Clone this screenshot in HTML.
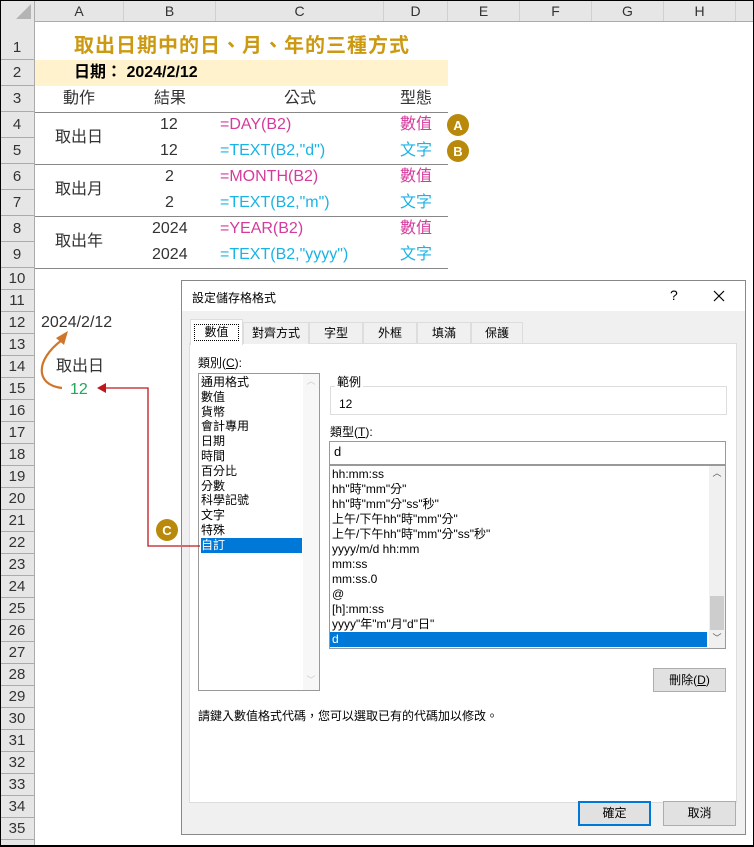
<!DOCTYPE html>
<html><head><meta charset="utf-8"><style>
*{margin:0;padding:0;box-sizing:border-box}
body{width:754px;height:847px;position:relative;background:#fff;font-family:"Liberation Sans","Noto Sans CJK TC",sans-serif;overflow:hidden}
.a{position:absolute;white-space:nowrap}
.hd{background:#e6e6e6;color:#333;font-size:14px}
.cell{font-size:16px;color:#333;height:26px;line-height:26px}
.dlg{font-size:12px;color:#000}
</style></head><body>
<div class="a" style="left:0;top:0;width:754px;height:847px;border:1px solid #000;border-bottom:2px solid #000;z-index:50;pointer-events:none"></div>
<div class="a hd" style="left:0;top:0;width:754px;height:22px;border-bottom:1px solid #ababab"></div>
<div class="a hd" style="left:0;top:0;width:35px;height:847px;border-right:1px solid #ababab"></div>
<svg class="a" style="left:0;top:0" width="35" height="22"><polygon points="31,4 31,19 16,19" fill="#b4b4b4"/></svg>
<div id="cols"></div>
<div id="rows"></div>
<script>
var c=[35,124,216,384,448,520,592,664,736,754],L="ABCDEFGH",h="";
for(var i=0;i<8;i++){h+='<div class="a hd" style="left:'+c[i]+'px;top:0;width:'+(c[i+1]-c[i])+'px;height:21px;border-right:1px solid #d0d0d0;text-align:center;line-height:22px">'+L[i]+'</div>';}
document.getElementById('cols').innerHTML=h;
var r=[22,60,86,112,138,164,190,216,242,268];for(var n=10;n<=36;n++)r.push(268+(n-9)*22);
h="";for(var n=1;n<=35;n++){var t=r[n-1],b=r[n];h+='<div class="a hd" style="left:0;top:'+t+'px;width:34px;height:'+(b-t)+'px;border-bottom:1px solid #ababab;text-align:center;line-height:'+(n==1?52:(b-t))+'px;font-size:15px">'+n+'</div>';}
document.getElementById('rows').innerHTML=h;
</script>
<div class="a" style="left:74px;top:29px;font-size:20px;font-weight:bold;color:#cc9a12;letter-spacing:1px">取出日期中的日、月、年的三種方式</div>
<div class="a" style="left:35px;top:60px;width:413px;height:26px;background:#fff2cc"></div>
<div class="a cell" style="left:74px;top:60px;color:#000;font-weight:bold">日期：&nbsp;2024/2/12</div>
<div class="a" style="left:35px;top:112px;width:413px;height:1px;background:#888"></div>
<div class="a" style="left:35px;top:164px;width:413px;height:1px;background:#888"></div>
<div class="a" style="left:35px;top:216px;width:413px;height:1px;background:#888"></div>
<div class="a" style="left:35px;top:268px;width:413px;height:1px;background:#888"></div>
<div class="a cell" style="left:63px;top:86px">動作</div>
<div class="a cell" style="left:154px;top:86px">結果</div>
<div class="a cell" style="left:284px;top:86px">公式</div>
<div class="a cell" style="left:400px;top:86px">型態</div>
<div class="a cell" style="left:55px;top:125px">取出日</div>
<div class="a cell" style="left:55px;top:177px">取出月</div>
<div class="a cell" style="left:55px;top:229px">取出年</div>
<div class="a cell" style="left:160px;top:112px">12</div>
<div class="a cell" style="left:160px;top:138px">12</div>
<div class="a cell" style="left:165px;top:164px">2</div>
<div class="a cell" style="left:165px;top:190px">2</div>
<div class="a cell" style="left:152px;top:216px">2024</div>
<div class="a cell" style="left:152px;top:242px">2024</div>
<div class="a cell" style="left:220px;top:112px;color:#d63a9c">=DAY(B2)</div>
<div class="a cell" style="left:220px;top:138px;color:#1ab3e6">=TEXT(B2,"d")</div>
<div class="a cell" style="left:220px;top:164px;color:#d63a9c">=MONTH(B2)</div>
<div class="a cell" style="left:220px;top:190px;color:#1ab3e6">=TEXT(B2,"m")</div>
<div class="a cell" style="left:220px;top:216px;color:#d63a9c">=YEAR(B2)</div>
<div class="a cell" style="left:220px;top:242px;color:#1ab3e6">=TEXT(B2,"yyyy")</div>
<div class="a cell" style="left:400px;top:112px;color:#d63a9c">數值</div>
<div class="a cell" style="left:400px;top:138px;color:#1ab3e6">文字</div>
<div class="a cell" style="left:400px;top:164px;color:#d63a9c">數值</div>
<div class="a cell" style="left:400px;top:190px;color:#1ab3e6">文字</div>
<div class="a cell" style="left:400px;top:216px;color:#d63a9c">數值</div>
<div class="a cell" style="left:400px;top:242px;color:#1ab3e6">文字</div>
<div class="a cell" style="left:41px;top:310px">2024/2/12</div>
<div class="a cell" style="left:56px;top:354px">取出日</div>
<div class="a cell" style="left:70px;top:377px;color:#1fa85a">12</div>
<svg class="a" style="left:0;top:0;z-index:5" width="754" height="847">
<circle cx="458" cy="125" r="11" fill="#b8890a"/><text x="458" y="130" text-anchor="middle" font-size="13" font-weight="bold" fill="#fff" font-family="Liberation Sans">A</text>
<circle cx="458" cy="151" r="11" fill="#b8890a"/><text x="458" y="156" text-anchor="middle" font-size="13" font-weight="bold" fill="#fff" font-family="Liberation Sans">B</text>
<path d="M62,388 C35,385 35,360 62,340" stroke="#d0762a" stroke-width="2.2" fill="none"/>
<polygon points="68,331 56,338 64,345" fill="#d0762a"/>
<polyline points="200,546 148,546 148,388 106,388" stroke="#c0171f" stroke-width="1.3" fill="none"/>
<polygon points="97,388 106,383 106,393" fill="#c0171f"/>
</svg>
<div class="a" style="left:181px;top:280px;width:565px;height:555px;background:#f0f0f0;border:1px solid #888;z-index:10">
 <div class="a" style="left:0;top:0;width:563px;height:30px;background:#fff"></div>
 <div class="a dlg" style="left:10px;top:8px">設定儲存格格式</div>
 <div class="a" style="left:488px;top:6px;font-size:14px">?</div>
 <svg class="a" style="left:531px;top:9px" width="12" height="12"><path d="M1,1L11,11M11,1L1,11" stroke="#000" stroke-width="1.2"/></svg>
 <div class="a" style="left:7px;top:62px;width:548px;height:460px;background:#fff;border:1px solid #ddd"></div>
 <div class="a dlg" style="left:61px;top:41px;width:66px;height:22px;border:1px solid #ddd;border-bottom:none;text-align:center;line-height:20px;background:#f0f0f0">對齊方式</div>
 <div class="a dlg" style="left:127px;top:41px;width:54px;height:22px;border:1px solid #ddd;border-bottom:none;text-align:center;line-height:20px">字型</div>
 <div class="a dlg" style="left:181px;top:41px;width:54px;height:22px;border:1px solid #ddd;border-bottom:none;text-align:center;line-height:20px">外框</div>
 <div class="a dlg" style="left:235px;top:41px;width:54px;height:22px;border:1px solid #ddd;border-bottom:none;text-align:center;line-height:20px">填滿</div>
 <div class="a dlg" style="left:289px;top:41px;width:52px;height:22px;border:1px solid #ddd;border-bottom:none;text-align:center;line-height:20px">保護</div>
 <div class="a dlg" style="left:8px;top:38px;width:53px;height:26px;background:#fff;border:1px solid #ddd;border-bottom:none"><div style="margin:4px 3px;border:1px dotted #000;text-align:center;height:17px;line-height:15px">數值</div></div>
 <div class="a dlg" style="left:16px;top:73px">類別(<u>C</u>):</div>
 <div class="a dlg" style="left:16px;top:92px;width:122px;height:318px;border:1px solid #999;background:#fff;line-height:14.8px;padding:1px 0 0 2px">
  <div>通用格式</div><div>數值</div><div>貨幣</div><div>會計專用</div><div>日期</div><div>時間</div><div>百分比</div><div>分數</div><div>科學記號</div><div>文字</div><div>特殊</div><div style="background:#0078d7;color:#fff;width:101px">自訂</div>
  <div class="a" style="right:0;top:0;width:16px;height:316px;background:#f7f7f7;color:#ccc;font-size:9px;text-align:center">︿<div style="position:absolute;bottom:2px;width:16px">﹀</div></div>
 </div>
 <div class="a" style="left:148px;top:105px;width:397px;height:29px;border:1px solid #ddd"></div>
 <div class="a dlg" style="left:153px;top:92px;background:#fff;padding:0 2px">範例</div>
 <div class="a dlg" style="left:157px;top:116px">12</div>
 <div class="a dlg" style="left:148px;top:142px">類型(<u>T</u>):</div>
 <div class="a" style="left:147px;top:160px;width:397px;height:24px;border:1px solid #999;background:#fff;font-size:13px;padding:2px 4px">d</div>
 <div class="a dlg" style="left:147px;top:184px;width:397px;height:184px;border:1px solid #999;background:#fff;line-height:15px;padding:1px 0 0 2px">
  <div>hh:mm:ss</div><div>hh"時"mm"分"</div><div>hh"時"mm"分"ss"秒"</div><div>上午/下午hh"時"mm"分"</div><div>上午/下午hh"時"mm"分"ss"秒"</div><div>yyyy/m/d hh:mm</div><div>mm:ss</div><div>mm:ss.0</div><div>@</div><div>[h]:mm:ss</div><div>yyyy"年"m"月"d"日"</div><div style="background:#0078d7;color:#fff;width:377px;padding-left:2px;margin-left:-2px">d</div>
  <div class="a" style="right:0;top:0;width:16px;height:182px;background:#f0f0f0;font-size:9px;text-align:center;color:#555">︿<div style="position:absolute;top:130px;left:1px;width:14px;height:34px;background:#cdcdcd"></div><div style="position:absolute;bottom:2px;width:16px">﹀</div></div>
 </div>
 <div class="a dlg" style="left:471px;top:387px;width:73px;height:24px;border:1px solid #adadad;background:#e1e1e1;text-align:center;line-height:22px">刪除(<u>D</u>)</div>
 <div class="a dlg" style="left:16px;top:426px">請鍵入數值格式代碼，您可以選取已有的代碼加以修改。</div>
 <div class="a dlg" style="left:396px;top:520px;width:73px;height:25px;border:2px solid #0078d7;background:#e1e1e1;text-align:center;line-height:21px">確定</div>
 <div class="a dlg" style="left:481px;top:520px;width:73px;height:25px;border:1px solid #adadad;background:#e1e1e1;text-align:center;line-height:23px">取消</div>
</div>
<svg class="a" style="left:0;top:0;z-index:20" width="754" height="847">
<polyline points="200,546 182,546" stroke="#c0171f" stroke-width="1.3"/>
<circle cx="167" cy="530" r="11" fill="#b8890a"/><text x="167" y="535" text-anchor="middle" font-size="13" font-weight="bold" fill="#fff" font-family="Liberation Sans">C</text>
</svg>
</body></html>
